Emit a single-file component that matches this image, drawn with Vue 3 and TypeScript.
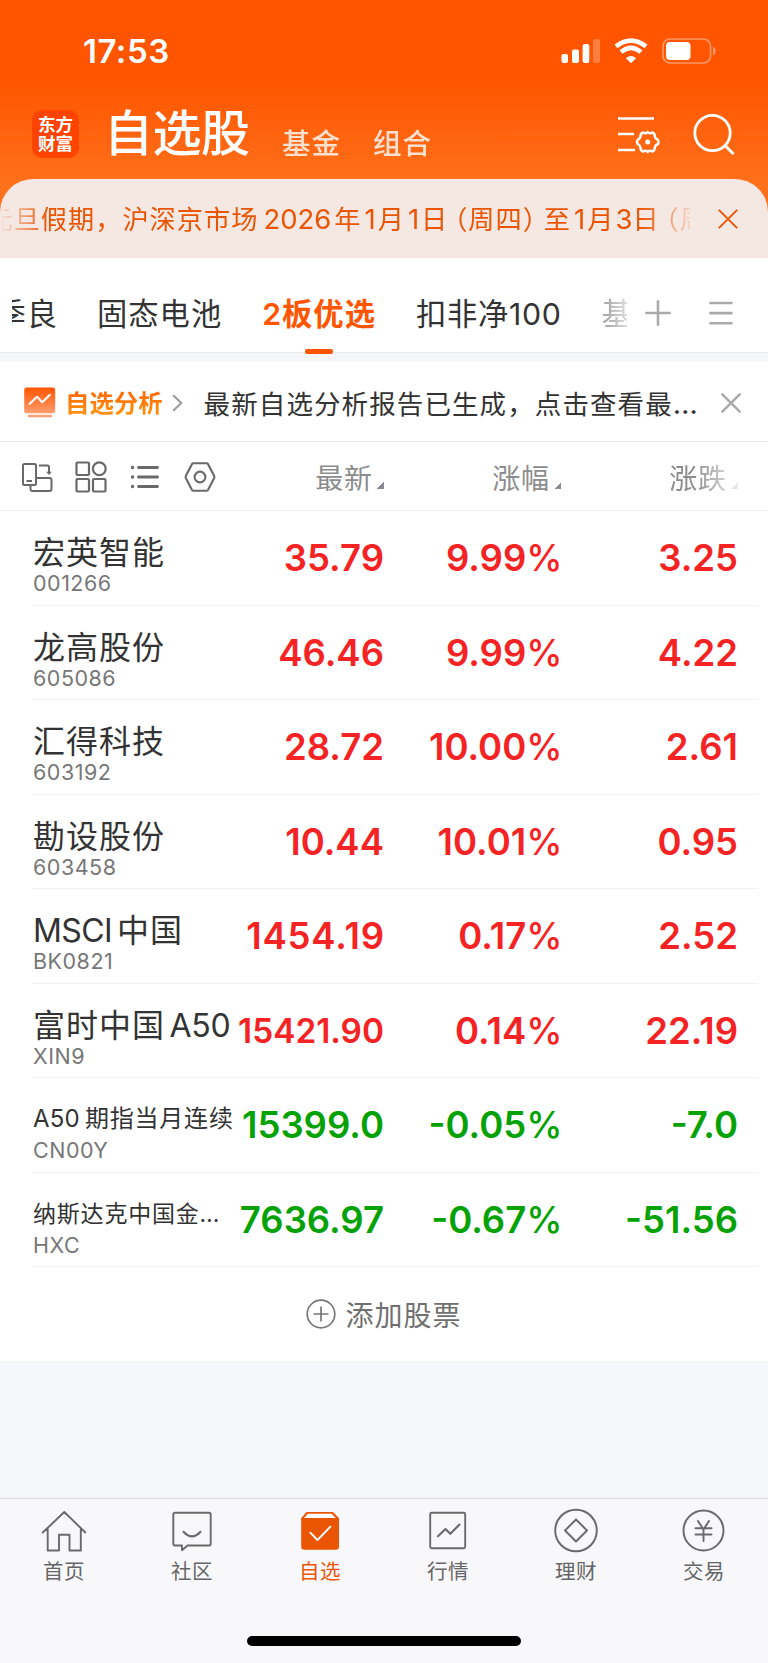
<script setup lang="ts">
interface Stock {
  name: string[]
  code: string
  last: string
  pct: string
  change: string
  trend: 'up' | 'down'
  nameClass?: string
  lastClass?: string
}

const stocks: Stock[] = [
  { name: ['宏英智能'], code: '001266', last: '35.79', pct: '9.99', change: '3.25', trend: 'up' },
  { name: ['龙高股份'], code: '605086', last: '46.46', pct: '9.99', change: '4.22', trend: 'up' },
  { name: ['汇得科技'], code: '603192', last: '28.72', pct: '10.00', change: '2.61', trend: 'up' },
  { name: ['勘设股份'], code: '603458', last: '10.44', pct: '10.01', change: '0.95', trend: 'up' },
  { name: ['MSCI', '中国'], code: 'BK0821', last: '1454.19', pct: '0.17', change: '2.52', trend: 'up', lastClass: 'wide' },
  { name: ['富时中国', 'A50'], code: 'XIN9', last: '15421.90', pct: '0.14', change: '22.19', trend: 'up', lastClass: 'compact' },
  { name: ['A50', '期指当月连续'], code: 'CN00Y', last: '15399.0', pct: '-0.05', change: '-7.0', trend: 'down', nameClass: 'small' },
  { name: ['纳斯达克中国金…'], code: 'HXC', last: '7636.97', pct: '-0.67', change: '-51.56', trend: 'down', nameClass: 'smaller' },
]

const isLatin = (part: string): boolean => /^[A-Z0-9]+$/.test(part)

const columns = ['最新', '涨幅', '涨跌']
const nav = ['首页', '社区', '自选', '行情', '理财', '交易']
</script>

<template>
  <div class="screen">
    <header class="top">
      <div class="status">
        <span class="time">17:53</span>
        <svg class="status-icons" width="156" height="28" viewBox="0 0 156 28">
          <g fill="#fff">
            <rect x="1.5" y="17" width="6.5" height="9" rx="2" />
            <rect x="12" y="12.5" width="7" height="13.5" rx="2" />
            <rect x="22.6" y="7" width="6.7" height="19" rx="2" />
            <rect x="33" y="2" width="7" height="24" rx="2" opacity=".25" />
            <path d="M71 26 66.2 21.3 Q71 17.4 75.8 21.3Z" stroke="#fff" stroke-linejoin="round" stroke-width=".6" />
            <rect x="106" y="5" width="24.5" height="18" rx="4" />
            <path d="M153 9.5Q155.8 11 155.8 14T153 18.5Z" opacity=".4" />
          </g>
          <path d="M56 9.4Q71-2.2 86 9.4M61 15Q71 6.8 81 15" fill="none" stroke="#fff" stroke-width="4.6" />
          <rect x="103" y="2" width="47.5" height="24" rx="7" fill="none" stroke="#fff" stroke-opacity=".4" stroke-width="1.7" />
        </svg>
      </div>
      <div class="titlebar">
        <div class="logo"><span>东方</span><span>财富</span></div>
        <h1>自选股</h1>
        <span class="mode">基金</span>
        <span class="mode">组合</span>
        <svg class="manage" width="44" height="40" viewBox="0 0 44 40" fill="none" stroke="#fff" stroke-width="2.7">
          <path d="M1 4.5H37M1 20H17M1 36H18" />
          <path d="M26 18.5Q28.4 20 30.7 18.2Q33 20 35.4 18.5Q37.8 19.2 37.8 22.5Q38.2 24.8 41 26Q42 28 41 30Q38.2 31.2 37.8 33.5Q37.6 37 35.4 37.5Q33 36 30.7 37.8Q28.4 36 26 37.5Q23.6 36.8 23.4 33.5Q23 31.2 20.6 30Q19.4 28 20.6 26Q23 24.8 23.4 22.5Q23.6 19.2 26 18.5Z" stroke-width="2.5" />
          <circle cx="30.7" cy="28" r="2.5" fill="#fff" stroke="none" />
        </svg>
        <svg class="search" width="44" height="44" viewBox="0 0 44 44" fill="none" stroke="#fff" stroke-width="2.8">
          <circle cx="20.5" cy="20" r="17.7" /><path d="M33 32.5 41.5 41" stroke-width="3" />
        </svg>
      </div>
    </header>

    <section class="notice">
      <div class="marquee">
        <span>元旦假期，沪深京市场</span><b class="year">2026</b><span>年</span><b>1</b><span>月</span><b>1</b><span>日</span><span class="open">（</span><span>周四</span><span class="close">）</span><span>至</span><b>1</b><span>月</span><b class="tight">3</b><span>日</span><span class="open">（</span><span>周</span>
      </div>
      <svg width="20" height="20" viewBox="0 0 20 20"><path d="M.8.8 19.2 19.2M19.2.8.8 19.2" fill="none" stroke="#ea5504" stroke-width="1.9" /></svg>
    </section>

    <nav class="groups">
      <div class="prev"><span>季良</span></div>
      <span class="g1">固态电池</span>
      <span class="g2 active">2板优选</span>
      <span class="g3">扣非净100</span>
      <span class="g4">基</span>
      <svg class="plus" width="26" height="26" viewBox="0 0 26 26"><path d="M13 1.3V24.7M1.3 13H24.7" fill="none" stroke="#aaa" stroke-linecap="round" stroke-width="2.6" /></svg>
      <svg class="menu" width="24" height="26" viewBox="0 0 24 26"><path d="M1.5 3H22.5M1.5 13.1H22.5M1.5 23.2H22.5" fill="none" stroke="#aaa" stroke-linecap="round" stroke-width="2.6" /></svg>
    </nav>

    <section class="analysis">
      <svg class="chart" width="32" height="32" viewBox="0 0 32 32">
        <defs><linearGradient id="chartFill" x2="0" y2="1"><stop stop-color="#ff5500" /><stop offset="1" stop-color="#ff9d70" /></linearGradient></defs>
        <rect x=".2" y=".5" width="31" height="25.8" rx="2.4" fill="url(#chartFill)" />
        <path d="M5.5 17 13 9.8 18.2 15.2 26 7.8" fill="none" stroke="#fff" stroke-width="2" stroke-linecap="round" stroke-linejoin="round" />
        <path d="M5 29H27" stroke="#ffa077" stroke-width="2.4" stroke-linecap="round" />
      </svg>
      <strong>自选分析</strong>
      <svg class="chev" width="11" height="18" viewBox="0 0 11 18"><path d="M1.2 1.2 9.3 9 1.2 16.8" fill="none" stroke="#999" stroke-width="2" /></svg>
      <p>最新自选分析报告已生成，点击查看最<span class="dots">…</span></p>
      <svg width="20" height="20" viewBox="0 0 20 20"><path d="M1.3 1.3 18.7 18.7M18.7 1.3 1.3 18.7" fill="none" stroke="#aaa" stroke-width="2.5" stroke-linecap="round" /></svg>
    </section>

    <section class="table">
      <div class="thead">
        <div class="tools">
          <svg width="32" height="32" viewBox="0 0 32 32" fill="none" stroke="#696969" stroke-width="2">
            <rect x="2" y="3" width="13" height="21" rx="1.5" /><path d="M5.5 20H11M18 4.5H26.5Q28 4.5 28 6V12M15 17H28.5Q30.5 17 30.5 19V27.5Q30.5 30 28.5 30H11.5Q9.5 30 9.5 28V24" /><path d="M25.2 10.8H30.8L28 14Z" fill="#696969" stroke="none" />
          </svg>
          <svg width="32" height="32" viewBox="0 0 32 32" fill="none" stroke="#696969" stroke-width="2.2">
            <rect x="1.5" y="1.5" width="12.5" height="12.5" rx="1" /><circle cx="24.3" cy="7.8" r="6.4" /><rect x="1.5" y="18" width="12.5" height="12.5" rx="1" /><rect x="18" y="18" width="12.5" height="12.5" rx="1" />
          </svg>
          <svg width="30" height="26" viewBox="0 0 30 26" stroke="#696969" stroke-linecap="round">
            <path d="M8.5 3.5H27.5M8.5 13H27.5M8.5 22.5H27.5" stroke-width="2.8" /><path d="M2.5 3.5H2.6M2.5 13H2.6M2.5 22.5H2.6" stroke-width="3.4" />
          </svg>
          <svg width="32" height="32" viewBox="0 0 32 32" fill="none" stroke="#696969" stroke-width="2.1">
            <path d="M9.5 2.2H22.5Q23.5 2.2 24 3L30.2 15Q30.6 16 30.2 17L24 29Q23.5 29.8 22.5 29.8H9.5Q8.5 29.8 8 29L1.8 17Q1.4 16 1.8 15L8 3Q8.5 2.2 9.5 2.2Z" /><circle cx="16" cy="16" r="5.4" />
          </svg>
        </div>
        <div v-for="c in columns" :key="c" class="col"><span>{{ c }}</span><i></i></div>
      </div>
      <div v-for="s in stocks" :key="s.code" class="row" :class="s.trend">
        <div class="id">
          <div class="name" :class="s.nameClass"><span v-for="part in s.name" :key="part" :class="{ latin: isLatin(part) }">{{ part }}</span></div>
          <div class="code">{{ s.code }}</div>
        </div>
        <div class="num" :class="s.lastClass">{{ s.last }}</div>
        <div class="num">{{ s.pct }}<em>%</em></div>
        <div class="num">{{ s.change }}</div>
      </div>
      <div class="add">
        <svg width="30" height="30" viewBox="0 0 30 30" fill="none" stroke="#777" stroke-width="1.7"><circle cx="15" cy="15" r="13.8" /><path d="M15 7.5V22.5M7.5 15H22.5" /></svg>
        <span>添加股票</span>
      </div>
    </section>

    <footer class="tabbar">
      <div class="tabs">
        <div v-for="(n, i) in nav" :key="n" class="tab" :class="{ on: i === 2 }">
          <svg width="46" height="46" viewBox="0 0 46 46" fill="none" stroke="#696969" stroke-width="1.9" stroke-linejoin="round" stroke-linecap="round">
            <path v-if="i === 0" d="M1.8 24.5 23.3 4 44.3 24.5M6.7 20.5V42.5H18V26.8H28.5V42.5H39.8V20.5" />
            <g v-else-if="i === 1"><path d="M6 4.7H40Q41.7 4.7 41.7 6.4V35.5Q41.7 37.5 40 37.5H18.5L13 42.2V37.5H6Q4.3 37.5 4.3 35.8V6.4Q4.3 4.7 6 4.7Z" /><path d="M14.5 23.8Q23 33 31.5 23.8" stroke-width="2.1" /></g>
            <g v-else-if="i === 2" stroke="none"><path d="M9.5 4H36L42 10.3V38.5Q42 41.7 38.7 41.7H7.5Q4.2 41.7 4.2 38.5V10.3Z" fill="#ea5504" /><path d="M11 5.8H34.7L38.7 10H7Z" fill="#fff" /><path d="M13.3 24.7 20.5 32 33.5 18.7" stroke="#fff" stroke-width="1.9" /></g>
            <g v-else-if="i === 3"><rect x="5.2" y="4.7" width="35" height="35.5" rx="1.5" /><path d="M13 28.3 20.5 21 25.3 25.8 34.5 16.5" stroke-width="2.1" /></g>
            <g v-else-if="i === 4"><circle cx="23" cy="22.5" r="20.8" /><path d="M23 11.5 34 22.5 23 33.5 12 22.5Z" /></g>
            <g v-else><circle cx="22.5" cy="22.5" r="20" /><path d="M17 13 22.5 21.5 28 13M14.5 20.2H30.5M14.5 26.5H30.5M22.5 21.5V33" /></g>
          </svg>
          <span>{{ n }}</span>
        </div>
      </div>
      <div class="home"></div>
    </footer>
  </div>
</template>

<style>
body { background: #f5f7fa; }
</style>

<style scoped>
* { box-sizing: border-box; }
.screen { width: 768px; height: 1663px; display: flex; flex-direction: column; overflow: hidden; background: #f5f7fa; font-family: Inter, "Noto Sans CJK SC", sans-serif; color: #333; white-space: nowrap; }
svg { display: block; flex: none; overflow: visible; }

.top { height: 212px; flex: none; background: linear-gradient(#ff5500 80px, #ff701b 182px); color: #fff; }
.status { height: 102px; display: flex; justify-content: space-between; padding: 37px 52px 0 83px; }
.time { font-size: 33px; line-height: 29px; font-weight: 600; letter-spacing: .5px; }
.titlebar { height: 77px; display: flex; padding-left: 32px; }
.logo { width: 47px; height: 48px; margin-top: 8px; border-radius: 10px; background: #ff4300; display: flex; flex-direction: column; align-items: center; justify-content: center; font-size: 17.5px; line-height: 19.5px; font-weight: 700; }
h1 { margin: 7px 0 0 25px; font-size: 49px; line-height: 50px; font-weight: 500; letter-spacing: -.5px; }
.mode { margin: 26px 0 0 32.5px; font-size: 28.5px; line-height: 32px; letter-spacing: 1px; font-weight: 500; opacity: .8; }
.mode + .mode { margin-left: 32px; }
.manage { margin: 12px 0 0 auto; }
.search { margin: 11px 32px 0 31px; }

.notice { height: 79px; margin-top: -33px; flex: none; display: flex; align-items: center; background: #f5e8e3; border-radius: 33px 33px 0 0; color: #ea5504; padding-right: 30px; }
.marquee { width: 690px; height: 40px; line-height: 40px; overflow: hidden; font-size: 26.2px; letter-spacing: 1px; text-indent: -13.5px; margin-right: auto; -webkit-mask-image: linear-gradient(90deg, transparent 0, #000 48px, #000 640px, transparent 698px); mask-image: linear-gradient(90deg, transparent 0, #000 48px, #000 640px, transparent 698px); }
.marquee b { font-weight: 400; font-size: 27.5px; letter-spacing: 0; margin: 0 2px 0 3px; }
.marquee .year { margin: 0 3px 0 5px; }
.marquee .tight { margin: 0 0 0 1px; }
.open, .close { font-feature-settings: "halt" 1; }
.open { margin-left: 6px; }
.close { margin-right: 7px; }

.groups { height: 95px; flex: none; display: flex; align-items: center; background: #fff; border-bottom: 1px solid #eaeaea; font-size: 30.3px; padding-top: 16px; letter-spacing: 1px; line-height: 40px; position: relative; }
.groups > span, .prev { margin-top: 1px; }
.prev { margin-left: 12px; width: 46px; overflow: hidden; display: flex; justify-content: flex-end; }
.groups .g1 { margin-left: 39px; }
.groups .g2 { margin-left: 40px; color: #ff5500; font-weight: 600; }
.g2::after { content: ""; position: absolute; left: 305px; bottom: -1.5px; width: 28px; height: 5px; border-radius: 2px; background: #ff5500; }
.groups .g3 { margin-left: 40px; letter-spacing: .7px; }
.groups .g4 { margin-left: 40px; width: 25px; overflow: hidden; color: #aaa; -webkit-mask-image: linear-gradient(90deg, #000 20%, rgba(0, 0, 0, .4)); mask-image: linear-gradient(90deg, #000 20%, rgba(0, 0, 0, .4)); }
.plus { margin-left: auto; }
.menu { margin: 0 35px 0 38px; }

.analysis { height: 80px; margin-top: 9px; flex: none; display: flex; align-items: center; background: #fff; border-bottom: 1px solid #ececec; padding: 3px 27px 0 24px; }
.analysis strong { margin-left: 9px; font-size: 24.4px; font-weight: 700; line-height: 32px; background: linear-gradient(#ff5f00, #ff9a10); -webkit-background-clip: text; background-clip: text; color: transparent; }
.chev { margin-left: 9px; }
.analysis p { margin: 1px auto 0 21px; font-size: 26.5px; line-height: 36px; letter-spacing: 1.1px; }
.dots { letter-spacing: 0; font-size: 29px; }

.table { background: #fff; height: 919px; flex: none; }
.thead { height: 69px; border-bottom: 1px solid #efefef; display: grid; grid-template-columns: 208px 177px 177px 177px; }
.tools { display: flex; align-items: center; padding: 2px 0 0 20.5px; gap: 22.8px; }
.tools svg:nth-child(4) { margin-left: 1px; }
.col { display: flex; justify-content: flex-end; align-items: center; font-size: 28px; letter-spacing: .6px; color: #8c8c8c; padding-top: 1px; }
.col i { width: 7.5px; height: 7.5px; margin: 18px 1px 0 4px; background: linear-gradient(135deg, transparent 50%, #888a94 50%); }
.col:last-child { -webkit-mask-image: linear-gradient(90deg, #000 75%, rgba(0, 0, 0, .15)); mask-image: linear-gradient(90deg, #000 75%, rgba(0, 0, 0, .15)); }
.row { height: 94.5px; margin: 0 10px 0 32px; border-bottom: 1px solid #f3f3f3; display: grid; grid-template-columns: 201px 151px 178.5px 175.5px; }
.id { padding: 24px 0 0 1px; }
.name { font-size: 32px; line-height: 36px; letter-spacing: 1px; color: #333; }
.latin { letter-spacing: -.3px; }
.latin:first-child { margin-right: 5px; letter-spacing: -.6px; }
.latin:last-child { margin-left: 4.5px; }
.name.small { font-size: 24px; line-height: 34px; padding-bottom: 2px; letter-spacing: .8px; }
.small .latin:first-child { letter-spacing: .2px; margin-right: 5px; }
.name.smaller { font-size: 23px; line-height: 34px; padding-bottom: 2px; letter-spacing: .8px; }
.code { font-size: 21.5px; line-height: 25px; letter-spacing: .5px; color: #777; }
.num { text-align: right; font-size: 36.5px; font-weight: 600; line-height: 95px; }
.num em { font-style: normal; font-weight: 500; }
.compact { font-size: 33.4px; }
.wide { letter-spacing: .8px; margin-right: -.8px; }
.up .num { color: #f52323; }
.down .num { color: #05a205; }
.add { height: 94px; display: flex; align-items: center; justify-content: center; font-size: 28px; letter-spacing: 1px; color: #707070; gap: 9px; }

.tabbar { margin-top: auto; height: 165px; flex: none; background: #f8f8fb; border-top: 1px solid #dededf; }
.tabs { height: 137px; display: grid; grid-template-columns: repeat(6, 1fr); padding-top: 8.5px; }
.tab { display: flex; flex-direction: column; align-items: center; font-size: 20.5px; color: #666; letter-spacing: .5px; }
.tab span { line-height: 26px; margin-top: 5.5px; }
.tab.on { color: #ea5504; }
.home { width: 274px; height: 10px; border-radius: 5px; background: #000; margin: 0 auto; }
</style>
